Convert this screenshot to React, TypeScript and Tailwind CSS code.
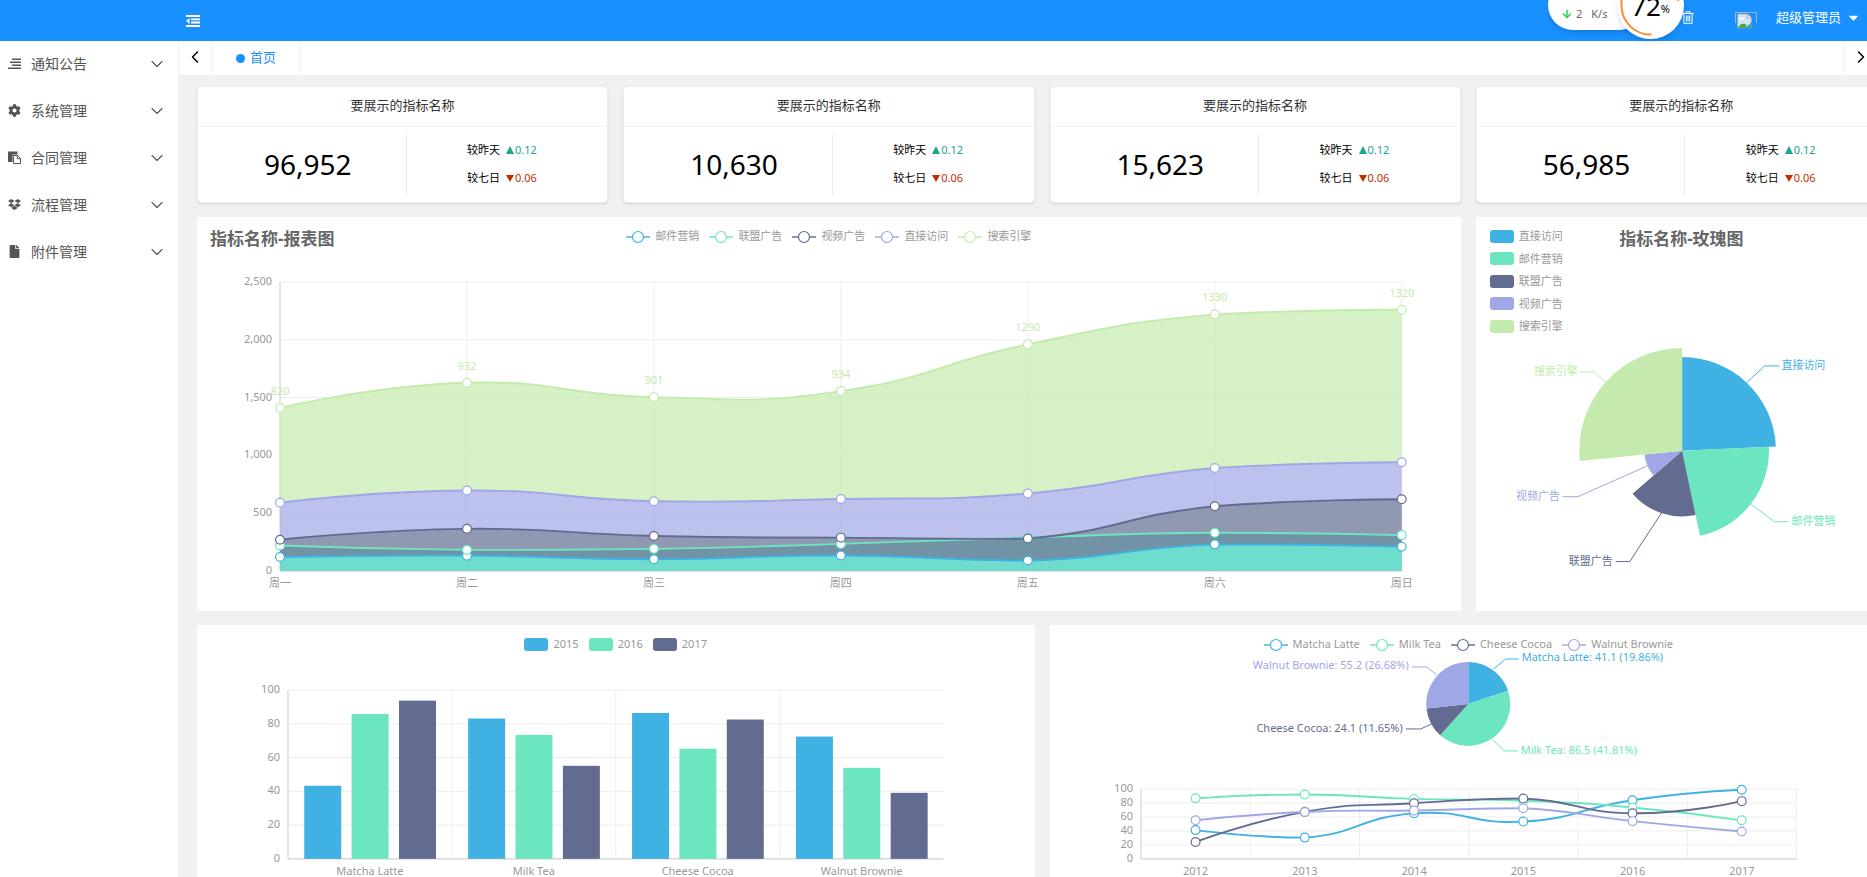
import React from 'react';
import { FaCog, FaDropbox, FaFile, FaCaretDown } from 'react-icons/fa';
import { ChevronDown, ChevronLeft, ChevronRight, ArrowDown } from 'lucide-react';

const COLORS = ['#3fb1e3', '#6be6c1', '#626c91', '#a0a7e6', '#c4ebad'];

const AlignIcon: React.FC<{ size: number }> = ({ size }) => (
  <svg width={size} height={size} viewBox="0 0 13 13" fill="currentColor">
    <path d="M4 1.500h9v1.600H4zM2 4.500h11v1.600H2zM4 7.500h9v1.600H4zM0 10.400h13v1.600H0z" />
  </svg>
);

const PasteIcon: React.FC<{ size: number }> = ({ size }) => (
  <svg width={size} height={size} viewBox="0 0 13 13" fill="currentColor">
    <path d="M0 0.500h9.500v3H5.500a1 1 0 0 0-1 1V11H0z" />
    <path d="M5.500 4.500h4l3 3v5h-7zM9.300 4.700v3h3" fill="none" stroke="currentColor" />
  </svg>
);

const MENU = [
  { name: '通知公告', icon: AlignIcon },
  { name: '系统管理', icon: FaCog },
  { name: '合同管理', icon: PasteIcon },
  { name: '流程管理', icon: FaDropbox },
  { name: '附件管理', icon: FaFile },
];

const CARDS = ['96,952', '10,630', '15,623', '56,985'];

type Point = [number, number];

// Smooth curve, control points clamped to the bounding box of the series
const curve = (pts: Point[]) => {
  const xs = pts.map((p) => p[0]);
  const ys = pts.map((p) => p[1]);
  const clampX = (v: number) => Math.max(Math.min(...xs), Math.min(Math.max(...xs), v));
  const clampY = (v: number) => Math.max(Math.min(...ys), Math.min(Math.max(...ys), v));
  let cp: Point = pts[0];
  let d = '';
  for (let i = 1; i < pts.length; i++) {
    const p = pts[i];
    const prev = pts[i - 1];
    const next = pts[i + 1];
    let cp1: Point = p;
    let cpNext: Point = p;
    if (next) {
      const vx = next[0] - prev[0];
      const vy = next[1] - prev[1];
      const lenPrev = Math.hypot(p[0] - prev[0], p[1] - prev[1]);
      const lenNext = Math.hypot(p[0] - next[0], p[1] - next[1]);
      const ratio = lenNext / (lenNext + lenPrev);
      cp1 = [clampX(p[0] - vx * 0.5 * (1 - ratio)), clampY(p[1] - vy * 0.5 * (1 - ratio))];
      cpNext = [clampX(p[0] + vx * 0.5 * ratio), clampY(p[1] + vy * 0.5 * ratio)];
    }
    d += `C${cp[0]},${cp[1]} ${cp1[0]},${cp1[1]} ${p[0]},${p[1]}`;
    cp = cpNext;
  }
  return d;
};

const linePath = (pts: Point[]) => `M${pts[0][0]},${pts[0][1]}${curve(pts)}`;

const areaPath = (top: Point[], bottom: Point[]) => {
  const back = [...bottom].reverse();
  return `${linePath(top)}L${back[0][0]},${back[0][1]}${curve(back)}Z`;
};

// Angles are in degrees, clockwise from 12 o'clock
const sector = (cx: number, cy: number, r: number, from: number, to: number) => {
  const at = (a: number) => {
    const rad = (a * Math.PI) / 180;
    return `${cx + r * Math.sin(rad)},${cy - r * Math.cos(rad)}`;
  };
  return `M${cx},${cy}L${at(from)}A${r},${r} 0 ${to - from > 180 ? 1 : 0} 1 ${at(to)}Z`;
};

const slices = (values: number[]) => {
  const total = values.reduce((a, b) => a + b, 0);
  let sum = 0;
  return values.map((v) => {
    const from = (sum / total) * 360;
    sum += v;
    return { from, to: (sum / total) * 360 };
  });
};

interface LegendProps {
  items: string[];
  type: 'line' | 'rect';
  className?: string;
}

const Legend: React.FC<LegendProps> = ({ items, type, className = '' }) => (
  <div className={`flex ${className}`}>
    {items.map((name, i) => (
      <button key={name} type="button" className="flex h-[13px] items-center gap-[5px] text-[11px] leading-[13px] text-[#999]">
        <svg width="24" height="14" viewBox="0 0 24 14" className="mt-[2px] shrink-0">
          {type === 'rect' ? (
            <rect width="24" height="13" rx="3" fill={COLORS[i]} />
          ) : (
            <g stroke={COLORS[i]}>
              <path d="M0 7h24" strokeWidth="1.8" opacity="0.8" />
              <circle cx="12" cy="7" r="5.500" strokeWidth="1.200" fill="#fff" />
            </g>
          )}
        </svg>
        {name}
      </button>
    ))}
  </div>
);

interface AxisProps {
  x0: number;
  x1: number;
  y0: number;
  y1: number;
  ticks: string[];
  labels: string[];
  // false puts the categories on the grid lines instead of between them
  boundary?: boolean;
  // draws the last vertical grid line too
  closed?: boolean;
}

const Axis: React.FC<AxisProps> = ({ x0, x1, y0, y1, ticks, labels, boundary = true, closed = true }) => {
  const n = boundary ? labels.length : labels.length - 1;
  const step = (x1 - x0) / n;
  return (
    <g fontSize="11" fill="#999">
      {ticks.map((t, i) => {
        const y = y0 - ((y0 - y1) * i) / (ticks.length - 1);
        return (
          <g key={t}>
            <path d={`M${x0} ${y}H${x1}`} stroke="#eee" />
            <text x={x0 - 8} y={y + 3} textAnchor="end">{t}</text>
          </g>
        );
      })}
      {Array.from({ length: closed ? n : n - 1 }, (_, i) => (
        <path key={i} d={`M${x0 + step * (i + 1)} ${y0}V${y1}`} stroke="#eee" />
      ))}
      <path d={`M${x0} ${y1}V${y0}H${x1}`} stroke="#ccc" fill="none" />
      {labels.map((l, i) => (
        <text key={l} x={x0 + step * (boundary ? i + 0.5 : i)} y={y0 + 16} textAnchor="middle">{l}</text>
      ))}
    </g>
  );
};

const Dots: React.FC<{ pts: Point[]; color: string }> = ({ pts, color }) => (
  <g fill="#fff" stroke={color} strokeWidth="1.2">
    {pts.map(([x, y]) => (
      <circle key={x} cx={x} cy={y} r="4.4" />
    ))}
  </g>
);

const WEEK = ['周一', '周二', '周三', '周四', '周五', '周六', '周日'];
const EMAIL = [120, 132, 101, 134, 90, 230, 210];
const UNION = [220, 182, 191, 234, 290, 330, 310];
const VIDEO = [150, 232, 201, 154, 190, 330, 410];
const DIRECT = [320, 332, 301, 334, 390, 330, 320];
const SEARCH = [820, 932, 901, 934, 1290, 1330, 1320];

const StackChart: React.FC = () => {
  const add = (a: number[], b: number[]) => a.map((v, i) => v + b[i]);
  const toPts = (values: number[]): Point[] => values.map((v, i) => [83 + 187 * i, 314 - (v / 2500) * 289]);
  const zero = toPts(WEEK.map(() => 0));
  const email = toPts(EMAIL);
  const union = toPts(UNION);
  const videoSum = add(EMAIL, VIDEO);
  const directSum = add(videoSum, DIRECT);
  const video = toPts(videoSum);
  const direct = toPts(directSum);
  const search = toPts(add(directSum, SEARCH));
  const series = [
    { top: email, bottom: zero },
    { top: union, bottom: zero },
    { top: video, bottom: email },
    { top: direct, bottom: video },
    { top: search, bottom: direct },
  ];

  return (
    <svg viewBox="0 0 1264 354" className="block w-full">
      <Axis x0={83} x1={1205} y0={314} y1={25} ticks={['0', '500', '1,000', '1,500', '2,000', '2,500']} labels={WEEK} boundary={false} />
      {series.map((s, i) => (
        <path key={i} d={areaPath(s.top, s.bottom)} fill={COLORS[i]} opacity="0.7" />
      ))}
      {series.map((s, i) => (
        <path key={i} d={linePath(s.top)} fill="none" stroke={COLORS[i]} strokeWidth="1.9" />
      ))}
      {series.map((s, i) => (
        <Dots key={i} pts={s.top} color={COLORS[i]} />
      ))}
      <g fontSize="11" fill={COLORS[4]} textAnchor="middle">
        {search.map(([x, y], i) => (
          <text key={x} x={x} y={y - 13}>{SEARCH[i]}</text>
        ))}
      </g>
    </svg>
  );
};

const ROSE = [
  { name: '直接访问', value: 335, line: '271,43 289,26 304,26', x: 306, y: 29, end: false },
  { name: '邮件营销', value: 310, line: '275,164 299,182 313,182', x: 316, y: 185, end: false },
  { name: '联盟广告', value: 234, line: '186,173 154,222 140,222', x: 137, y: 225, end: true },
  { name: '视频广告', value: 135, line: '172,126 102,157 87,157', x: 84, y: 160, end: true },
  { name: '搜索引擎', value: 367, line: '130,42 118,32 104,32', x: 102, y: 35, end: true },
];

const RoseChart: React.FC = () => {
  const parts = slices(ROSE.map((r) => r.value));
  return (
    <svg viewBox="0 0 412 264" className="block w-full">
      {ROSE.map((r, i) => (
        <g key={r.name}>
          <path d={sector(206.5, 111, (r.value / 367) * 103, parts[i].from, parts[i].to)} fill={COLORS[i]} />
          <polyline points={r.line} fill="none" stroke={COLORS[i]} />
          <text x={r.x} y={r.y} fontSize="11" fill={COLORS[i]} textAnchor={r.end ? 'end' : 'start'}>{r.name}</text>
        </g>
      ))}
    </svg>
  );
};

const PRODUCTS = ['Matcha Latte', 'Milk Tea', 'Cheese Cocoa', 'Walnut Brownie'];
const BARS = [
  [43.3, 85.8, 93.7],
  [83.1, 73.4, 55.1],
  [86.4, 65.2, 82.5],
  [72.4, 53.9, 39.1],
];
const PERCENTS = ['0', '20', '40', '60', '80', '100'];

const BarChart: React.FC = () => (
  <svg viewBox="0 0 838 369" className="block w-full">
    <Axis x0={91} x1={747} y0={209} y1={40} ticks={PERCENTS} labels={PRODUCTS} closed={false} />
    {BARS.map((group, g) =>
      group.map((v, i) => (
        <rect key={`${g}-${i}`} x={107.3 + g * 164 + i * 47.4} y={209 - v * 1.69} width="37" height={v * 1.69} fill={COLORS[i]} />
      ))
    )}
  </svg>
);

const YEARS = ['2012', '2013', '2014', '2015', '2016', '2017'];
const TRENDS = [
  [41.1, 30.4, 65.1, 53.3, 83.8, 98.7],
  [86.5, 92.1, 85.7, 83.1, 73.4, 55.1],
  [24.1, 67.2, 79.5, 86.4, 65.2, 82.5],
  [55.2, 67.1, 69.2, 72.4, 53.9, 39.1],
];
const PIE_LABELS = [
  { text: 'Matcha Latte: 41.1 (19.86%)', line: '444,19 456,9 469,9', x: 472, y: 11, end: false },
  { text: 'Milk Tea: 86.5 (41.81%)', line: '443,90 455,101 468,101', x: 471, y: 104, end: false },
  { text: 'Cheese Cocoa: 24.1 (11.65%)', line: '382,74 371,79 356,79', x: 353, y: 82, end: true },
  { text: 'Walnut Brownie: 55.2 (26.68%)', line: '387,25 377,17 362,17', x: 359, y: 19, end: true },
];

const TrendChart: React.FC = () => {
  const parts = slices(TRENDS.map((t) => t[0]));
  const series = TRENDS.map((t) => t.map((v, i): Point => [91 + 109.3 * (i + 0.5), 209 - v * 0.7]));
  return (
    <svg viewBox="0 0 838 369" className="block w-full">
      {PIE_LABELS.map((l, i) => (
        <g key={l.text}>
          <path d={sector(418.5, 54, 42, parts[i].from, parts[i].to)} fill={COLORS[i]} />
          <polyline points={l.line} fill="none" stroke={COLORS[i]} />
          <text x={l.x} y={l.y} fontSize="11" fill={COLORS[i]} textAnchor={l.end ? 'end' : 'start'}>{l.text}</text>
        </g>
      ))}
      <Axis x0={91} x1={747} y0={209} y1={139} ticks={PERCENTS} labels={YEARS} />
      {series.map((pts, i) => (
        <path key={i} d={linePath(pts)} fill="none" stroke={COLORS[i]} strokeWidth="1.9" />
      ))}
      {series.map((pts, i) => (
        <Dots key={i} pts={pts} color={COLORS[i]} />
      ))}
    </svg>
  );
};

const Header: React.FC = () => (
  <header className="relative flex h-[41px] shrink-0 items-center justify-between bg-[#1890ff] pr-[6px] pl-[185px] text-white">
    <button type="button" aria-label="收起菜单">
      <svg width="15" height="12" viewBox="0 0 15 12" fill="#fff">
        <path d="M1 0h14v2H1zM6 3.4h9v1.8H6zM6 6.6h9v1.8H6zM1 10h14v2H1zM1 6l3.6-3v6z" />
      </svg>
    </button>
    <div className="flex items-center pb-[6px]">
      <button type="button" aria-label="清除缓存">
        <svg width="12" height="13" viewBox="0 0 12 13" fill="none" stroke="#fff">
          <path d="M0.5 2.5h11M3.8 2.5V0.8h4.4v1.7M1.9 2.5v9.8h8.2V2.5M4.3 4.5v6M6 4.5v6M7.7 4.5v6" />
        </svg>
      </button>
      {/* Avatar fails to load */}
      <svg width="22" height="17" viewBox="0 0 22 17" className="mt-[6px] ml-[41px]">
        <path d="M0.5 11V0.5h21V11" fill="none" stroke="#9fb4c8" />
        <path d="M2.500 2h10l4 4v10h-14z" fill="#d3e3f5" stroke="#9aa3ad" strokeWidth="0.8" />
        <path d="M12.500 2v4h4z" fill="#fff" stroke="#9aa3ad" strokeWidth="0.8" />
        <path d="M4 7.500a2 2 0 0 1 3.200-1.400A1.600 1.600 0 0 1 9.500 7.500z" fill="#fff" />
        <path d="M3 16c1-4 6-6 9-2.500L10 16z" fill="#4fa83d" />
        <path d="M9.500 17l7.500-7v2l-5 5z" fill="#1890ff" />
        <path d="M12.500 16l4-3.500V16z" fill="#4fa83d" />
      </svg>
      <button type="button" className="ml-[19px] flex items-center gap-[5px] text-[13px]">
        超级管理员
        <FaCaretDown size={15} />
      </button>
    </div>

    {/* Floating speed monitor */}
    <div className="absolute top-[-20px] right-[223px] flex h-[50px] w-[96px] items-end rounded-full bg-white pb-[8px] pl-[13px] text-[11px] leading-4 text-[#666] shadow-md">
      <ArrowDown size={12} strokeWidth={3} className="mb-[2px] text-[#2ecc5e]" />
      <span className="ml-[3px]">2</span>
      <span className="ml-[9px]">K/s</span>
    </div>
    <div className="absolute top-[-28px] right-[183px] flex h-[67px] w-[67px] items-center justify-center rounded-full bg-white text-black shadow-md">
      <svg width="67" height="67" viewBox="0 0 67 67" className="absolute inset-0" fill="none" stroke="#ff8a3c" strokeWidth="2">
        <path d="M34.5 62.5A29 29 0 0 1 4.5 33.5V28M61.5 29A29 29 0 0 0 58 20" />
      </svg>
      <span className="text-[26px] leading-6">72</span>
      <span className="mt-[8px] text-[11px]">%</span>
    </div>
  </header>
);

const StatCard: React.FC<{ value: string }> = ({ value }) => (
  <div className="h-[117px] rounded-[4px] border border-[#ebeef9] bg-white shadow-sm">
    <h3 className="flex h-[40px] items-center justify-center border-b border-[#f1f2f6] pb-[2px] text-[13px] text-[#333]">要展示的指标名称</h3>
    <div className="flex h-[75px] items-center">
      <div className="flex h-[61px] w-[51%] items-center justify-center border-r border-[#e8ebf5] pb-[2px] pl-[12px] text-[28px] text-black">{value}</div>
      <div className="flex flex-1 flex-col items-center gap-[12px] pr-[10px] pb-[2px] text-[11px] leading-4 text-black">
        <p className="flex items-center">
          较昨天
          <svg width="8" height="8" viewBox="0 0 8 8" className="ml-[6px] mr-px"><path d="M4 0l4 8H0z" fill="#1ca594" /></svg>
          <span className="text-[#1ca594]">0.12</span>
        </p>
        <p className="flex items-center">
          较七日
          <svg width="8" height="8" viewBox="0 0 8 8" className="ml-[6px] mr-px"><path d="M4 8L0 1h8z" fill="#c12e00" /></svg>
          <span className="text-[#c12e00]">0.06</span>
        </p>
      </div>
    </div>
  </div>
);

const App: React.FC = () => {
  return (
    <div className="flex h-screen flex-col overflow-hidden bg-[#f1f1f1] font-['Noto_Sans','Noto_Sans_CJK_SC',sans-serif]">
      <Header />
      <div className="flex min-h-0 flex-1">
        <nav className="w-[178px] shrink-0 bg-white">
          {MENU.map(({ name, icon: Icon }) => (
            <a key={name} href="#" className="flex h-[47px] items-center pr-[11px] pb-[2px] pl-2 text-[14px] text-[#555]">
              <Icon size={13} />
              <span className="ml-[10px] flex-1">{name}</span>
              <ChevronDown size={20} strokeWidth={1.3} />
            </a>
          ))}
        </nav>

        <div className="flex min-w-0 flex-1 flex-col">
          <div className="-mr-[10px] ml-px flex h-[34px] shrink-0 bg-white text-[13px]">
            <button type="button" aria-label="向左" className="flex w-[33px] items-center justify-center border-r border-[#f1f1f1] pb-[2px] text-black">
              <ChevronLeft size={20} strokeWidth={1.8} />
            </button>
            <a href="#" className="flex w-[89px] items-center justify-center gap-[5px] border-r border-[#f1f1f1] text-[#1890ff]">
              <span className="size-[9px] rounded-full bg-[#1890ff]"></span>
              首页
            </a>
            <button type="button" aria-label="向右" className="ml-auto flex w-[33px] items-center justify-center border-l border-[#f1f1f1] pb-[2px] text-black">
              <ChevronRight size={20} strokeWidth={1.8} />
            </button>
          </div>

          {/* The dashboard is a little wider than the window */}
          <main className="-mr-[20px] ml-[19px] grid grid-cols-12 gap-x-[15px] gap-y-[14px] pt-[11px]">
            {CARDS.map((value) => (
              <div key={value} className="col-span-3">
                <StatCard value={value} />
              </div>
            ))}

            <section className="col-span-9 h-[394px] bg-white">
              <div className="grid h-[40px] grid-cols-[1fr_auto_1fr] items-start px-[13px] pt-[12px]">
                <h2 className="text-[17px] leading-[19px] font-bold text-[#666]">指标名称-报表图</h2>
                <Legend type="line" className="gap-[10px]" items={['邮件营销', '联盟广告', '视频广告', '直接访问', '搜索引擎']} />
              </div>
              <StackChart />
            </section>

            <section className="col-span-3 h-[394px] bg-white">
              <div className="grid h-[123px] grid-cols-[1fr_auto_1fr] items-start px-[14px] pt-[12px]">
                <Legend type="rect" className="h-[103px] flex-col justify-between" items={['直接访问', '邮件营销', '联盟广告', '视频广告', '搜索引擎']} />
                <h2 className="text-[17px] leading-[19px] font-bold text-[#666]">指标名称-玫瑰图</h2>
              </div>
              <RoseChart />
            </section>

            <section className="col-span-6 h-[394px] bg-white">
              <Legend type="rect" className="h-[25px] justify-center gap-[10px] pt-[12px]" items={['2015', '2016', '2017']} />
              <BarChart />
            </section>

            <section className="col-span-6 h-[394px] bg-white">
              <Legend type="line" className="h-[25px] justify-center gap-[10px] pt-[12px]" items={PRODUCTS} />
              <TrendChart />
            </section>
          </main>
        </div>
      </div>
    </div>
  );
};

export default App;
